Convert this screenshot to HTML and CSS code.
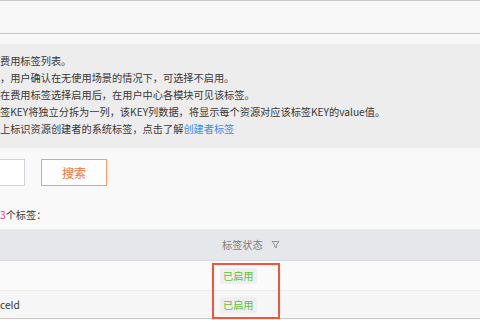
FILE: index.html
```html
<!DOCTYPE html>
<html lang="zh-CN">
<head>
<meta charset="utf-8">
<title>标签管理</title>
<link rel="stylesheet" href="styles.css">
</head>
<body>
<div class="page">
  <div class="topbar"></div>
  <div class="notice">
    <p class="ln">费用标签列表。</p>
    <p class="ln">，用户确认在无使用场景的情况下，可选择不启用。</p>
    <p class="ln">在费用标签选择启用后，在用户中心各模块可见该标签。</p>
    <p class="ln">签KEY将独立分拆为一列，该KEY列数据，将显示每个资源对应该标签KEY的value值。</p>
    <p class="ln">上标识资源创建者的系统标签，点击了解<a class="link" href="#">创建者标签</a></p>
  </div>
  <div class="search">
    <div class="input"></div>
    <button class="btn" type="button">搜索</button>
  </div>
  <div class="count"><span class="num">3</span>个标签：</div>
  <div class="table">
    <div class="row head">
      <div class="cell c1"></div>
      <div class="cell c2">标签状态
        <svg class="filter" width="9" height="9" viewBox="0 0 9 9"><path d="M1 1.5H8L5.3 4.8V7.8L3.7 7V4.8Z" fill="none" stroke="#8a8a8a" stroke-width="0.9" stroke-linejoin="round"/></svg>
      </div>
    </div>
    <div class="row r1">
      <div class="cell c1"></div>
      <div class="cell c2"><span class="badge">已启用</span></div>
    </div>
    <div class="row r2">
      <div class="cell c1 id">ceId</div>
      <div class="cell c2"><span class="badge">已启用</span></div>
    </div>
    <div class="highlight"></div>
  </div>
</div>
</body>
</html>
```
FILE: styles.css
```css
* { box-sizing: border-box; }
html, body { margin: 0; padding: 0; }
body {
  width: 480px;
  height: 320px;
  overflow: hidden;
  background: #f9f9f9;
  font-family: "Noto Sans CJK SC", "Noto Sans", sans-serif;
  font-size: 10.2px;
  color: #3a3a3a;
}
.page { width: 480px; }
.topbar {
  height: 34px;
  background: #f8f8f8;
  border-top: 1px solid #c9c9c9;
  border-bottom: 1px solid #c9c9c9;
}
.notice {
  margin-top: 10px;
  height: 104px;
  background: #ededed;
  padding: 8px 0 11px;
}
.ln {
  margin: 0;
  line-height: 17px;
  white-space: nowrap;
  color: #383838;
}
.link { color: #3a8ee6; text-decoration: none; }
.search {
  display: flex;
  margin-top: 11px;
  height: 27px;
}
.input {
  width: 25px;
  height: 27px;
  background: #fff;
  border: 1px solid #d2d3da;
  border-left: none;
}
.btn {
  margin-left: 16px;
  width: 66px;
  height: 27px;
  background: #fdfdfd;
  border: 1px solid #f4a263;
  color: #f3702f;
  font-family: inherit;
  font-size: 12px;
  padding: 0;
}
.count {
  margin-top: 20px;
  line-height: 17px;
  color: #383838;
}
.num { color: #e8379a; }
.table {
  position: relative;
  margin-top: 6px;
}
.row {
  display: grid;
  grid-template-columns: 212px 1fr;
  align-items: center;
}
.head {
  height: 32px;
  background: #e6e7ea;
  border-bottom: 1px solid #d9dadd;
  color: #7d7d7d;
}
.head .c2 { padding-left: 10px; display: flex; align-items: center; }
.filter { margin-left: 8px; }
.r1 {
  height: 30px;
  background: #fafafa;
  border-bottom: 1px solid #ececec;
}
.r2 {
  height: 28px;
  background: #f6f6f6;
  border-bottom: 1px solid #c9c9c9;
}
.r1 .c2, .r2 .c2 { padding-left: 8px; }
.id { color: #333; }
.badge {
  display: inline-block;
  background: #efefef;
  color: #62bd3e;
  border-radius: 3px;
  padding: 1px 3px;
  line-height: 14px;
}
.highlight {
  position: absolute;
  left: 212px;
  top: 34px;
  width: 68px;
  height: 56px;
  border: 2px solid #f2553a;
}
```
